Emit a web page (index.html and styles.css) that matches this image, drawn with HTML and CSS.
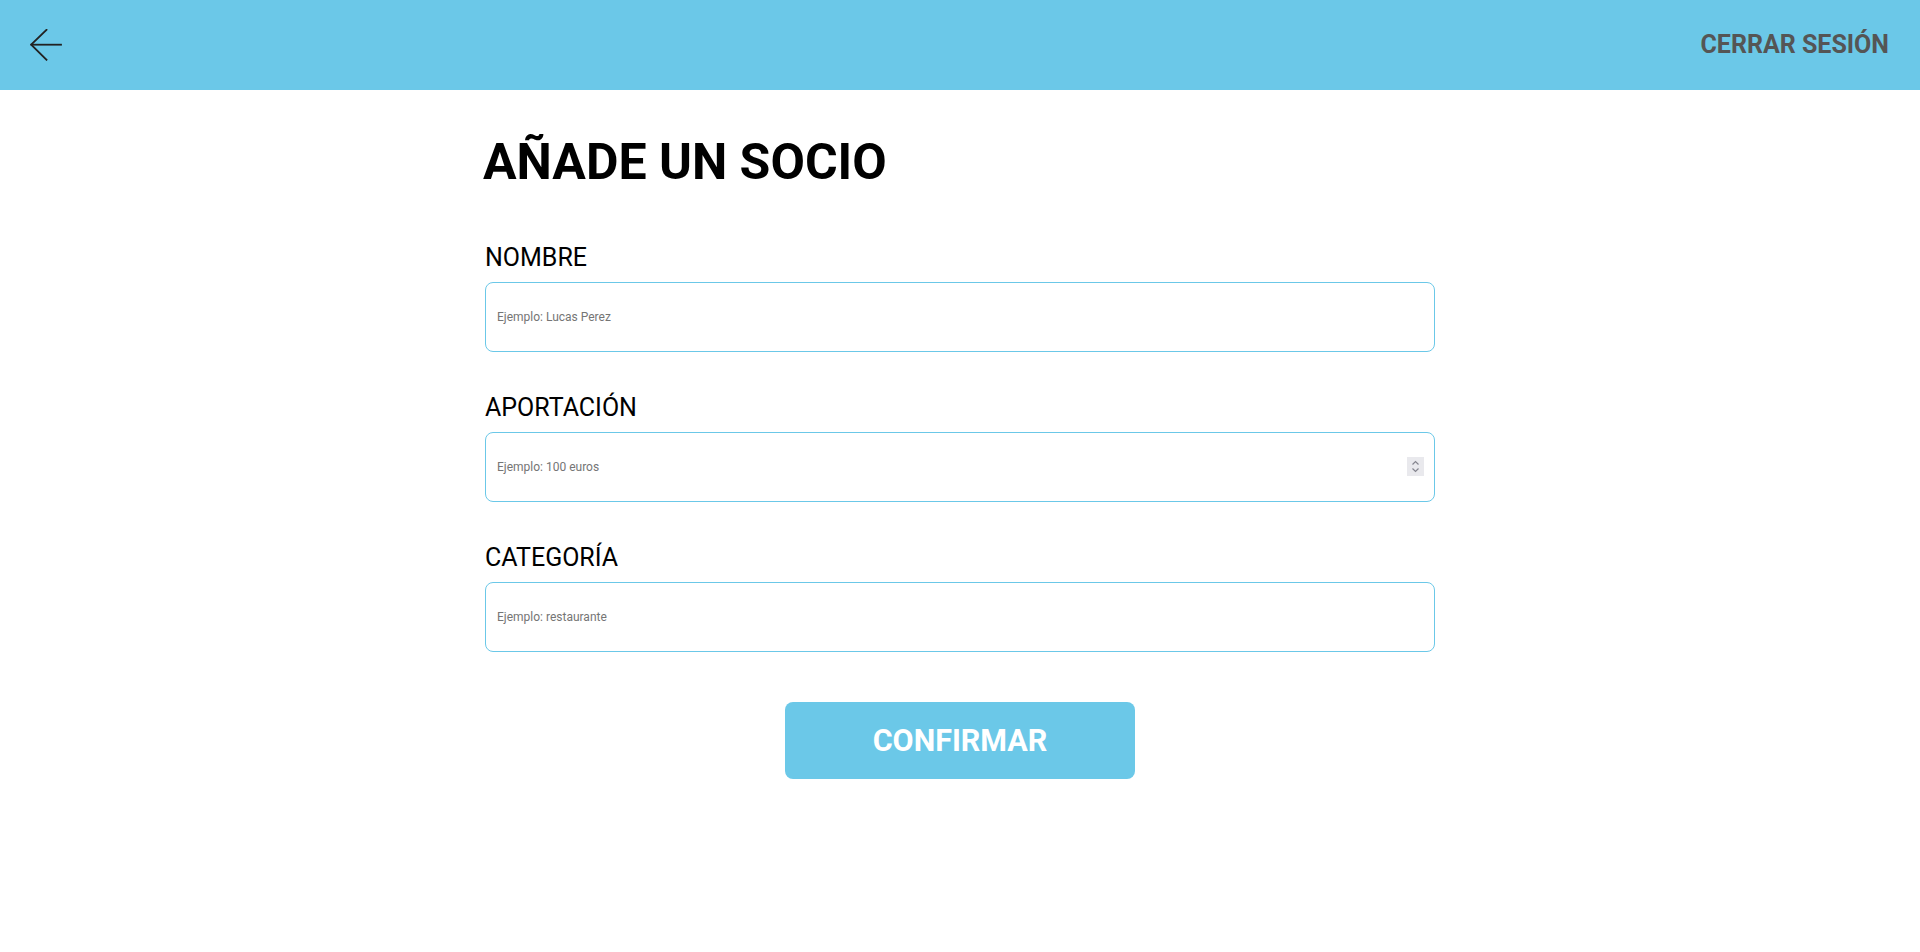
FILE: index.html
```html
<!DOCTYPE html>
<html lang="es">
<head>
<meta charset="utf-8">
<title>Añade un socio</title>
<link rel="stylesheet" href="styles.css">
</head>
<body>
<header class="topbar">
  <button class="back" aria-label="Volver">
    <svg width="32" height="32" viewBox="0 0 32 32" fill="none" stroke="#222" stroke-width="1.8" stroke-linecap="square">
      <path d="M1.5 15.7H31"/>
      <path d="M16.5 0.8L1.2 15.7L16.5 30.8"/>
    </svg>
  </button>
  <a class="logout" href="#">CERRAR SESIÓN</a>
</header>
<main class="content">
  <h1 class="title">AÑADE UN SOCIO</h1>
  <form class="form">
    <label class="field">
      <span class="label">NOMBRE</span>
      <input class="input" type="text" placeholder="Ejemplo: Lucas Perez">
    </label>
    <label class="field">
      <span class="label">APORTACIÓN</span>
      <span class="number-wrap">
        <input class="input" type="number" placeholder="Ejemplo: 100 euros">
        <span class="spin" aria-hidden="true">
          <svg width="17" height="19" viewBox="0 0 17 19" fill="none" stroke="#85858f" stroke-width="1.2">
            <path d="M5.5 7.5L8.5 4.5L11.5 7.5"/>
            <path d="M5.5 11.5L8.5 14.5L11.5 11.5"/>
          </svg>
        </span>
      </span>
    </label>
    <label class="field">
      <span class="label">CATEGORÍA</span>
      <input class="input" type="text" placeholder="Ejemplo: restaurante">
    </label>
    <div class="actions">
      <button class="confirm" type="button">CONFIRMAR</button>
    </div>
  </form>
</main>
</body>
</html>
```
FILE: styles.css
```css
* { box-sizing: border-box; }
html, body { margin: 0; padding: 0; background: #fff; }
body { font-family: Roboto, "Liberation Sans", sans-serif; color: #000; }

.topbar {
  height: 90px;
  background: #6bc8e8;
  display: flex;
  align-items: center;
  justify-content: space-between;
  padding: 0 31px 0 30px;
}
.back {
  background: none;
  border: 0;
  padding: 0;
  width: 32px;
  height: 32px;
  display: flex;
  cursor: pointer;
}
.logout {
  font-family: Roboto, sans-serif;
  font-weight: 700;
  font-size: 25px;
  line-height: 30px;
  color: #555;
  text-decoration: none;
}

.content {
  width: 950px;
  margin: 0 auto;
  padding-top: 42px;
}
.title {
  margin: 0 0 0 -2px;
  font-size: 50px;
  line-height: 61px;
  font-weight: 700;
}
.form {
  display: flex;
  flex-direction: column;
  gap: 41px;
  margin-top: 50px;
}
.field {
  display: flex;
  flex-direction: column;
  gap: 10px;
}
.label {
  font-size: 25px;
  line-height: 29px;
  font-weight: 400;
}
.input {
  display: block;
  height: 70px;
  width: 100%;
  border: 1px solid #6bc8e8;
  border-radius: 8px;
  padding: 0 10px 0 11px;
  font-family: Roboto, sans-serif;
  font-size: 12px;
  color: #333;
  outline: none;
  background: #fff;
}
.input::placeholder { color: #757575; }
.input::-webkit-inner-spin-button,
.input::-webkit-outer-spin-button { -webkit-appearance: none; margin: 0; }
.input[type="number"] { -moz-appearance: textfield; padding-right: 36px; }

.number-wrap {
  position: relative;
  display: block;
}
.spin {
  position: absolute;
  right: 11px;
  top: 25px;
  width: 17px;
  height: 19px;
  background: #e9e9ed;
  display: flex;
}

.actions {
  display: flex;
  justify-content: center;
  margin-top: 9px;
}
.confirm {
  width: 350px;
  height: 77px;
  border: 0;
  border-radius: 8px;
  background: #6bc8e8;
  color: #fff;
  font-family: Roboto, sans-serif;
  font-weight: 700;
  font-size: 30.5px;
  cursor: pointer;
}
```
